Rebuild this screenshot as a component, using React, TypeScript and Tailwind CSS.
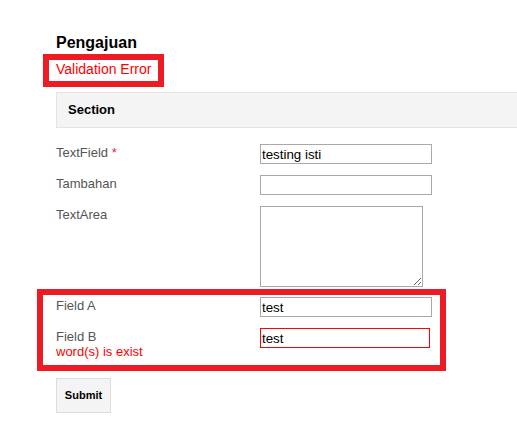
import { useState } from "react";

/* ── Field row ── */

function Row({ label, children, className = "" }: { label: React.ReactNode; children: React.ReactNode; className?: string }) {
  return (
    <div className={`flex items-start ${className}`}>
      <div className="w-[204px] shrink-0 pt-[1px] text-[13px] leading-[15px] text-[#555]">{label}</div>
      {children}
    </div>
  );
}

const INPUT_CLASS =
  "h-[20px] w-[172px] border border-[#a9a9a9] bg-white px-[1px] text-[13.33px] text-black outline-none font-['Liberation_Sans',Arial,sans-serif]";

/* ── Component ── */

export default function App() {
  const [textField, setTextField] = useState("testing isti");
  const [tambahan, setTambahan] = useState("");
  const [textArea, setTextArea] = useState("");
  const [fieldA, setFieldA] = useState("test");
  const [fieldB, setFieldB] = useState("test");

  return (
    <div className="h-[445px] w-[517px] overflow-hidden bg-white pl-[56px] pt-[34px] font-['Liberation_Sans',Arial,sans-serif]">
      <h1 className="text-[16px] font-bold leading-[18px] text-black">Pengajuan</h1>

      {/* Validation summary */}
      <div className="-ml-[13px] mt-[2px] w-fit border-[6px] border-[#ed1c24] px-[7px] pb-[4px] pt-[1px] text-[14px] leading-[16px] text-[#f00]">
        Validation Error
      </div>

      {/* Section header */}
      <div className="mt-[5px] h-[36px] w-[480px] border border-[#e3e3e3] bg-[#f4f4f4] pl-[11px] text-[13px] font-bold leading-[34px] text-black">
        Section
      </div>

      <Row className="mt-[16px]" label={<>TextField <span className="text-[#e8243a]">*</span></>}>
        <input className={INPUT_CLASS} value={textField} onChange={(event) => setTextField(event.target.value)} />
      </Row>
      <Row className="mt-[11px]" label="Tambahan">
        <input className={INPUT_CLASS} value={tambahan} onChange={(event) => setTambahan(event.target.value)} />
      </Row>
      <Row className="mt-[11px]" label="TextArea">
        <textarea
          className="h-[81px] w-[163px] resize border border-[#a9a9a9] bg-white text-[13px] outline-none"
          value={textArea}
          onChange={(event) => setTextArea(event.target.value)}
        />
      </Row>

      {/* Highlighted fields */}
      <div className="-ml-[19px] mt-[2px] w-[409px] border-[6px] border-[#ed1c24] pb-[6px] pl-[13px] pt-[2px]">
        <Row label="Field A">
          <input className={INPUT_CLASS} value={fieldA} onChange={(event) => setFieldA(event.target.value)} />
        </Row>
        <Row className="mt-[11px]" label={<>Field B<span className="block text-[#f00]">word(s) is exist</span></>}>
          <input
            className="h-[20px] w-[170px] border border-[#f00] bg-white px-[1px] text-[13.33px] text-black outline-none font-['Liberation_Sans',Arial,sans-serif]"
            value={fieldB}
            onChange={(event) => setFieldB(event.target.value)}
          />
        </Row>
      </div>

      <button
        type="button"
        className="mt-[7px] h-[35px] w-[55px] border border-[#ddd] bg-[#f4f4f4] text-[11px] font-bold text-black"
      >
        Submit
      </button>
    </div>
  );
}
